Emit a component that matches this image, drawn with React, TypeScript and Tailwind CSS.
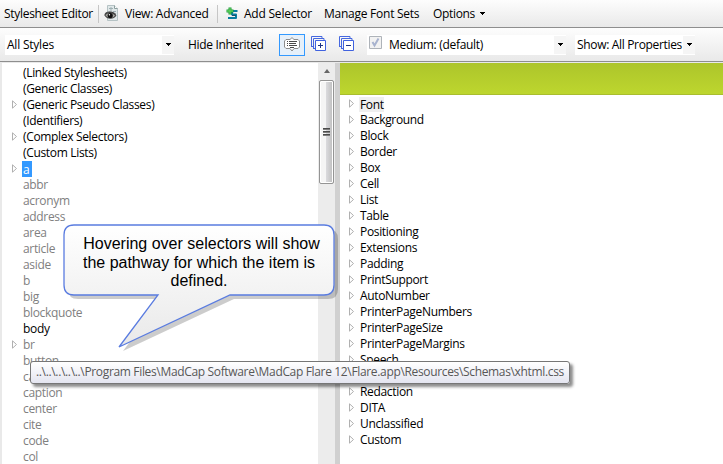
import React from 'react';

type Row = { name: string; arrow?: boolean; tone?: 'dark' | 'selected' };

const selectors: Row[] = [
  { name: '(Linked Stylesheets)', tone: 'dark' },
  { name: '(Generic Classes)', tone: 'dark' },
  { name: '(Generic Pseudo Classes)', tone: 'dark', arrow: true },
  { name: '(Identifiers)', tone: 'dark' },
  { name: '(Complex Selectors)', tone: 'dark', arrow: true },
  { name: '(Custom Lists)', tone: 'dark' },
  { name: 'a', tone: 'selected', arrow: true },
  { name: 'abbr' },
  { name: 'acronym' },
  { name: 'address' },
  { name: 'area' },
  { name: 'article' },
  { name: 'aside' },
  { name: 'b' },
  { name: 'big' },
  { name: 'blockquote' },
  { name: 'body', tone: 'dark' },
  { name: 'br', arrow: true },
  { name: 'button' },
  { name: 'canvas' },
  { name: 'caption' },
  { name: 'center' },
  { name: 'cite' },
  { name: 'code' },
  { name: 'col' },
];

const properties = [
  'Font', 'Background', 'Block', 'Border', 'Box', 'Cell', 'List', 'Table', 'Positioning',
  'Extensions', 'Padding', 'PrintSupport', 'AutoNumber', 'PrinterPageNumbers',
  'PrinterPageSize', 'PrinterPageMargins', 'Speech', '', 'Redaction', 'DITA',
  'Unclassified', 'Custom',
];

function Expander() {
  return (
    <svg width="6" height="9" viewBox="0 0 6 9" className="-mt-px block">
      <path d="M.5 .8 4.5 4.5.5 8.2Z" fill="#fff" stroke="#b0b0b0" strokeWidth="1" />
    </svg>
  );
}

function Caret() {
  return (
    <svg width="5" height="3" viewBox="0 0 5 3" className="block" shapeRendering="crispEdges">
      <path d="M0 0h5v1H4v1H3v1H2V2H1V1H0Z" fill="#000" />
    </svg>
  );
}

function ViewIcon() {
  return (
    <svg width="16" height="18" viewBox="0 0 16 18" className="-mt-px block">
      <path d="M3.5 1.500h7l3 3V16.500h-10Z" fill="#e0e8e9" stroke="#b5c2c4" />
      <path d="M10.500 1.500v3h3" fill="#fff" stroke="#8c9e9e" />
      <path d="M5 4.500h4M7 3v4M9 7.500h3" stroke="#9fb0b3" />
      <path d="M.8 11C3 7.8 9 7.8 11.8 11.5 9.5 15 3.5 15.500.8 11Z" fill="#a9a9a4" stroke="#444" strokeWidth="1.1" />
      <circle cx="6.200" cy="11.500" r="2.600" fill="#111" />
      <circle cx="5.400" cy="10.800" r=".7" fill="#fff" />
      <path d="M.8 9.800C4 7 9 7.500 12 10.500" fill="none" stroke="#333" />
    </svg>
  );
}

function AddSelectorIcon() {
  return (
    <svg width="13" height="14" viewBox="0 0 13 14" className="block">
      <path d="M11.500 4H6V7.500H10V11H2" fill="none" stroke="#087ca0" strokeWidth="2" strokeLinejoin="round" />
      <path d="M6 8.500h4" stroke="#16506c" strokeWidth="1" />
      <path d="M4 .5v7M.5 4h7" stroke="#1b9a35" strokeWidth="3" />
      <path d="M4 1v6M1 4h6" stroke="#5ed05b" strokeWidth="1.3" />
    </svg>
  );
}

function CommentIcon() {
  return (
    <svg width="16" height="15" viewBox="0 0 16 15" className="block">
      <path d="M2 2.500H6L8 .6 10 2.500h4l1.500 1.500v6l-1.500 1.500H10L8 14 6 11.500H2L.5 10V4Z" fill="#fff" stroke="#8c8c8c" />
      <path d="M5 4.500h8M5 6.500h7M5 8.500h8M6 10.500h4M3 4.500h1M3 6.500h1M3 8.500h1" stroke="#4a4a4a" />
    </svg>
  );
}

function StackIcon({ plus }: { plus?: boolean }) {
  return (
    <svg width="16" height="16" viewBox="0 0 16 16" className="-mt-0.5 block">
      <path d="M.5 11V.5H11V2M2.500 13V2.500H13V4M0 10.500h2M2 12.500h2" fill="none" stroke="#4668e0" />
      <path d="M4.500 4.500h10v10h-10Z" fill="#fff" stroke="#4062df" />
      <path d={plus ? 'M7 9.500h5M9.500 7v5' : 'M7 9.500h5'} stroke="#1d3385" />
    </svg>
  );
}

function ScrollBar() {
  return (
    <div className="flex w-[17px] shrink-0 flex-col items-center bg-[#ececec]">
      <div className="flex h-[17px] items-center">
        <svg width="6" height="4" viewBox="0 0 6 4" className="-mt-0.5 block">
          <path d="M3 0 6 4H0Z" fill="#666" />
        </svg>
      </div>
      <div className="flex h-[104px] w-[15px] flex-col items-center justify-center gap-px rounded-[2px] border border-[#949494] bg-linear-to-r from-[#f5f5f5] from-45% via-[#d9d9dc] via-50% to-[#bebebe] shadow-[inset_0_0_0_1px_#fff]">
        <div className="h-0.5 w-[7px] bg-linear-to-b from-[#333] to-[#999]" />
        <div className="h-0.5 w-[7px] bg-linear-to-b from-[#333] to-[#999]" />
        <div className="h-0.5 w-[7px] bg-linear-to-b from-[#333] to-[#999]" />
      </div>
    </div>
  );
}

export default function App() {
  return (
    <div className="relative flex h-[464px] w-[723px] flex-col overflow-hidden bg-[#e9e9e9] font-['Open_Sans','Noto_Sans',sans-serif] text-[12px] leading-4 tracking-[-0.33px] whitespace-nowrap text-black">
      <div className="flex h-7 shrink-0 items-center border-b border-[#8e8e8e] bg-linear-to-b from-[#fdfdfd] to-[#e9e9e9] pl-1">
        <span className="w-[94px] tracking-[-0.3px]">Stylesheet Editor</span>
        <span className="mr-[5px] h-[18px] w-px bg-[#c6c6c6]" />
        <ViewIcon />
        <span className="ml-[5px] w-[92px] tracking-[-0.27px]">View: Advanced</span>
        <span className="mr-2 h-[18px] w-px bg-[#c6c6c6]" />
        <AddSelectorIcon />
        <span className="ml-[5px] w-20 tracking-[-0.22px]">Add Selector</span>
        <span className="w-[109px] tracking-[-0.25px]">Manage Font Sets</span>
        <span className="w-[47px]">Options</span>
        <Caret />
      </div>
      <div className="flex h-[34px] shrink-0 items-center border-b border-[#8e8e8e] bg-linear-to-b from-[#fdfdfd] to-[#e9e9e9] pl-[5px]">
        <div className="flex h-5 w-[169px] items-center justify-between bg-white pl-0.5">
          <span className="tracking-[-0.22px]">All Styles</span>
          <span className="flex h-[18px] w-3 items-center justify-center bg-[#f5f5f5]"><Caret /></span>
        </div>
        <span className="ml-[14px] w-[91px]">Hide Inherited</span>
        <div className="flex h-[22px] w-[26px] items-center justify-center border border-[#3399ff] bg-[#e6f0fa]"><CommentIcon /></div>
        <div className="ml-1.5"><StackIcon plus /></div>
        <div className="ml-3"><StackIcon /></div>
        <div className="ml-3 flex h-5 w-[199px] items-center bg-white pl-0.5">
          <svg width="13" height="13" viewBox="0 0 13 13" className="-mt-1 block">
            <path d="M.5.5h12v12H.5Z" fill="#f2f2f2" stroke="#aeb3b9" />
            <path d="m3.500 6 2 3.500 4-7" fill="none" stroke="#a8b3cf" strokeWidth="2" />
          </svg>
          <span className="ml-[7px] flex-1 tracking-[-0.3px]">Medium: (default)</span>
          <span className="flex h-[18px] w-3 items-center justify-center bg-[#f5f5f5]"><Caret /></span>
        </div>
        <div className="ml-[9px] flex h-5 w-[120px] items-center bg-white pl-0.5">
          <span className="flex-1">Show: All Properties</span>
          <span className="flex h-[18px] w-3 items-center justify-center bg-[#f5f5f5]"><Caret /></span>
        </div>
      </div>
      <div className="mt-px flex h-[401px] shrink-0">
        <div className="ml-0.5 w-[316px] shrink-0 bg-white pt-0.5">
          {selectors.map((s) => (
            <div key={s.name} className="flex h-4 items-center pl-[10px]">
              <span className="w-[10px] shrink-0">{s.arrow && <Expander />}</span>
              {s.tone === 'selected' ? (
                <span className="-mt-px h-4 w-[10px] bg-[#3399ff] pl-px leading-[18px] text-white">{s.name}</span>
              ) : (
                <span className={s.tone === 'dark' ? 'pl-px' : 'pl-px text-[#808080]'}>{s.name}</span>
              )}
            </div>
          ))}
        </div>
        <ScrollBar />
        <div className="w-[5px] shrink-0 bg-[#d0d0d0]" />
        <div className="flex-1 bg-white">
          <div className="h-8 border-b border-[#a9bd2e] bg-linear-to-b from-[#adc52b] to-[#bdd62e]" />
          <div className="pt-px">
            {properties.map((p) => (
              <div key={p} className="flex h-4 items-center pl-[9px]">
                <span className="w-[10px] shrink-0"><Expander /></span>
                <span className={p === 'Font' ? 'h-[15px] bg-[#efefef] pl-px leading-4' : 'pl-px'}>{p}</span>
              </div>
            ))}
          </div>
        </div>
      </div>
      <div className="absolute top-[224px] left-[63px] h-[130px] w-[280px]">
        <svg width="280" height="130" viewBox="0 0 280 130" className="block">
          <defs>
            <linearGradient id="bubble" x1="0" y1="0" x2="0" y2="1">
              <stop offset="0" stopColor="#fff" />
              <stop offset="1" stopColor="#e9e9e9" />
            </linearGradient>
          </defs>
          <path d="M11 1H261Q271 1 271 11V61Q271 71 261 71H167L56 123 95 71H11Q1 71 1 61V11Q1 1 11 1Z" transform="translate(4 4)" fill="#000" fillOpacity=".2" />
          <path d="M11 1H261Q271 1 271 11V61Q271 71 261 71H167L56 123 95 71H11Q1 71 1 61V11Q1 1 11 1Z" fill="url(#bubble)" stroke="#5a7ce0" strokeWidth="1.3" />
        </svg>
        <div className="absolute top-[11px] left-0 w-[276px] text-center font-['Liberation_Sans',Arial,sans-serif] text-[16px] leading-[18.5px] tracking-normal">
          <div className="pl-px">Hovering over selectors will show</div>
          <div className="pr-1">the pathway for which the item is</div>
          <div className="pr-1">defined.</div>
        </div>
      </div>
      <div className="absolute top-[361px] left-[30px] flex h-[23px] w-[540px] items-center rounded-[3px] border border-[#767676] bg-linear-to-b from-white to-[#e4e5f0] pb-px pl-[5px] tracking-[-0.34px] text-[#575757] shadow-[3px_3px_3px_rgba(0,0,0,0.45)]">
        ..\..\..\..\..\Program Files\MadCap Software\MadCap Flare 12\Flare.app\Resources\Schemas\xhtml.css
      </div>
    </div>
  );
}
